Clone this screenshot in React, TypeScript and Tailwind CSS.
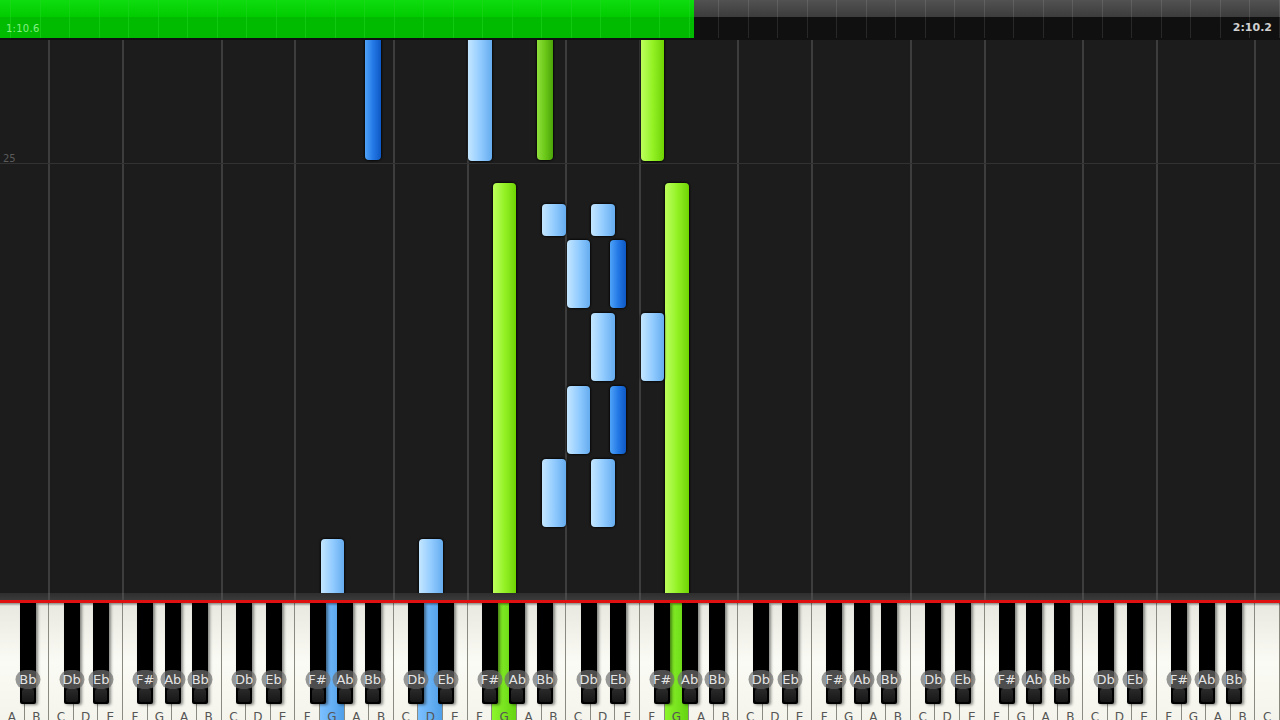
import React from 'react';

const KEY_W = 1280 / 52;
const WHITE_NAMES = ['A', 'B', 'C', 'D', 'E', 'F', 'G'];

// black key offsets (px) from the C of each octave
const BLACK_OFFSETS = [
    { name: 'Db', o: 14.5 },
    { name: 'Eb', o: 44 },
    { name: 'F#', o: 88 },
    { name: 'Ab', o: 115.5 },
    { name: 'Bb', o: 143 },
];

type Tone = 'light' | 'dark' | 'green' | 'deepGreen';

const noteClass: Record<Tone, string> = {
    light: 'bg-gradient-to-r from-[#c4e6ff] via-[#93ccff] to-[#65acef]',
    dark: 'bg-gradient-to-r from-[#4fa3f7] via-[#2479e6] to-[#0d58c4]',
    green: 'bg-gradient-to-r from-[#bcff5a] via-[#94f224] to-[#6fd400]',
    deepGreen: 'bg-gradient-to-r from-[#8fe03a] via-[#6cc818] to-[#4aa408]',
};

const whiteKeyX = (i: number) => i * KEY_W;
const blackKeyX = (octave: number, name: string) => {
    const off = BLACK_OFFSETS.find(b => b.name === name)!.o;
    return (2 + 7 * octave) * KEY_W + off;
};

// notes on the roll; octave numbering for black keys counts from C1 = 0
type Note = { x: number; w: number; top: number; bottom: number; tone: Tone };

const W = (i: number, top: number, bottom: number, tone: Tone): Note => ({ x: whiteKeyX(i) + 0.5, w: KEY_W - 1, top, bottom, tone });
const B = (oct: number, name: string, top: number, bottom: number, tone: Tone): Note => ({ x: blackKeyX(oct, name), w: 16, top, bottom, tone });

const notes: Note[] = [
    B(1, 'Bb', -10, 120, 'dark'),
    W(19, -10, 121, 'light'),
    B(2, 'Bb', -10, 120, 'deepGreen'),
    W(26, -10, 121, 'green'),
    W(20, 143, 560, 'green'),
    W(27, 143, 560, 'green'),
    W(22, 164, 196, 'light'),
    W(24, 164, 196, 'light'),
    W(23, 200, 268, 'light'),
    B(3, 'Eb', 200, 268, 'dark'),
    W(24, 273, 341, 'light'),
    W(26, 273, 341, 'light'),
    W(23, 346, 414, 'light'),
    B(3, 'Eb', 346, 414, 'dark'),
    W(22, 419, 487, 'light'),
    W(24, 419, 487, 'light'),
    W(13, 499, 560, 'light'),
    W(17, 499, 560, 'light'),
];

const pressed: Record<number, 'blue' | 'green'> = { 13: 'blue', 17: 'blue', 20: 'green', 27: 'green' };

// grid lines at every B|C and E|F boundary
const gridLines: number[] = [];
for (let k = 0; k < 8; k++) {
    [2 + 7 * k, 5 + 7 * k].forEach(i => {
        if (i < 52) gridLines.push(i * KEY_W);
    });
}

const blackKeys: { x: number; name: string }[] = [{ x: blackKeyX(-1, 'Bb'), name: 'Bb' }];
for (let oct = 0; oct < 7; oct++) {
    BLACK_OFFSETS.forEach(b => blackKeys.push({ x: blackKeyX(oct, b.name), name: b.name }));
}

const ticks = Array.from({ length: 44 }, (_, i) => 10 + i * 29.5);

function ProgressBar() {
    const progress = 694;
    return (
        <div className="relative h-10 shrink-0 overflow-hidden bg-[#0e0e0e]">
            <div className="flex h-full flex-col">
                <div className="h-[17px] bg-gradient-to-b from-[#525252] to-[#3c3c3c]" />
                <div className="flex-1 bg-[#101010]" />
            </div>
            <div className="absolute left-0 top-0 flex h-[38px] flex-col" style={{ width: progress }}>
                <div className="h-[17px] bg-gradient-to-b from-[#0fdc0f] to-[#00cc00]" />
                <div className="flex-1 bg-[#00bb00]" />
            </div>
            {ticks.map(x => (
                <div
                    key={x}
                    className={`absolute top-0 h-[38px] w-px ${x < progress ? 'bg-[#22d822]/50' : 'bg-white/10'}`}
                    style={{ left: x }}
                />
            ))}
            <span className="absolute bottom-[4px] left-[6px] text-[10px] tracking-wide text-[#a8ffa8]/80 [font-family:'DejaVu_Sans',sans-serif]">
                1:10.6
            </span>
            <span className="absolute bottom-[4px] right-[8px] text-[11px] font-bold text-[#d0d0d0] [font-family:'DejaVu_Sans',sans-serif]">
                2:10.2
            </span>
        </div>
    );
}

function NoteRoll() {
    return (
        <div className="relative h-[553px] shrink-0 overflow-hidden bg-[#1c1c1c]">
            {gridLines.map(x => (
                <div key={x} className="absolute top-0 h-full w-[2px] bg-[#3d3d3d]" style={{ left: x - 1 }} />
            ))}
            <div className="absolute left-0 right-0 top-[123px] h-px bg-[#323232]" />
            <span className="absolute left-[3px] top-[111px] text-[10px] text-[#5a5a5a] [font-family:'DejaVu_Sans',sans-serif]">25</span>
            {notes.map((n, i) => (
                <div
                    key={i}
                    className={`absolute rounded-[4px] shadow-[0_0_2px_1px_rgba(0,0,0,0.7)] ${noteClass[n.tone]}`}
                    style={{ left: n.x, width: n.w, top: n.top, height: n.bottom - n.top }}
                />
            ))}
        </div>
    );
}

function Keyboard() {
    return (
        <div className="flex flex-col">
            <div className="relative h-[7px] bg-gradient-to-b from-[#2e2e2e] to-[#3a3a3a]">
                {gridLines.map(x => (
                    <div key={x} className="absolute top-0 h-full w-[2px] bg-[#4a4a4a]" style={{ left: x - 1 }} />
                ))}
            </div>
            <div className="h-[3px] bg-[#e01010]" />
            <div className="relative h-[117px] overflow-hidden [font-family:'DejaVu_Sans',sans-serif]">
                <div className="grid h-full grid-cols-[repeat(52,minmax(0,1fr))]">
                    {Array.from({ length: 52 }, (_, i) => (
                        <div
                            key={i}
                            className={`flex flex-col items-center justify-end border-r border-[#8a8a80] ${
                                pressed[i] === 'blue'
                                    ? 'bg-gradient-to-r from-[#7cc0ff] to-[#4f9fe8]'
                                    : pressed[i] === 'green'
                                      ? 'bg-gradient-to-r from-[#8cf52c] to-[#66d410]'
                                      : 'bg-gradient-to-b from-[#e8e8e0] via-[#fbfbf5] to-[#f4f4ec]'
                            }`}
                        >
                            <span className="translate-y-[3px] text-[12px] leading-none text-[#555]">{WHITE_NAMES[i % 7]}</span>
                        </div>
                    ))}
                </div>
                <div className="absolute left-0 right-0 top-0 h-[3px] bg-gradient-to-b from-black/40 to-transparent" />
                {blackKeys.map(k => (
                    <div
                        key={k.x}
                        className="absolute top-0 h-[101px] w-[16px] rounded-b-[2px] bg-black shadow-[2px_1px_3px_rgba(0,0,0,0.45)]"
                        style={{ left: k.x }}
                    >
                        <div className="absolute bottom-[2px] left-[2px] right-[2px] h-[13px] rounded-[2px] bg-gradient-to-b from-[#2a2a2a] to-[#161616]" />
                        <div className="absolute left-1/2 top-[67px] flex h-[19px] w-[25px] -translate-x-1/2 items-center justify-center rounded-full bg-[#6e6e6e]/70">
                            <span className="text-[13px] leading-none text-[#e4e4e4]">{k.name}</span>
                        </div>
                    </div>
                ))}
            </div>
        </div>
    );
}

export default function App() {
    return (
        <div className="flex h-[720px] w-[1280px] flex-col overflow-hidden bg-[#1c1c1c]">
            <ProgressBar />
            <NoteRoll />
            <Keyboard />
        </div>
    );
}
